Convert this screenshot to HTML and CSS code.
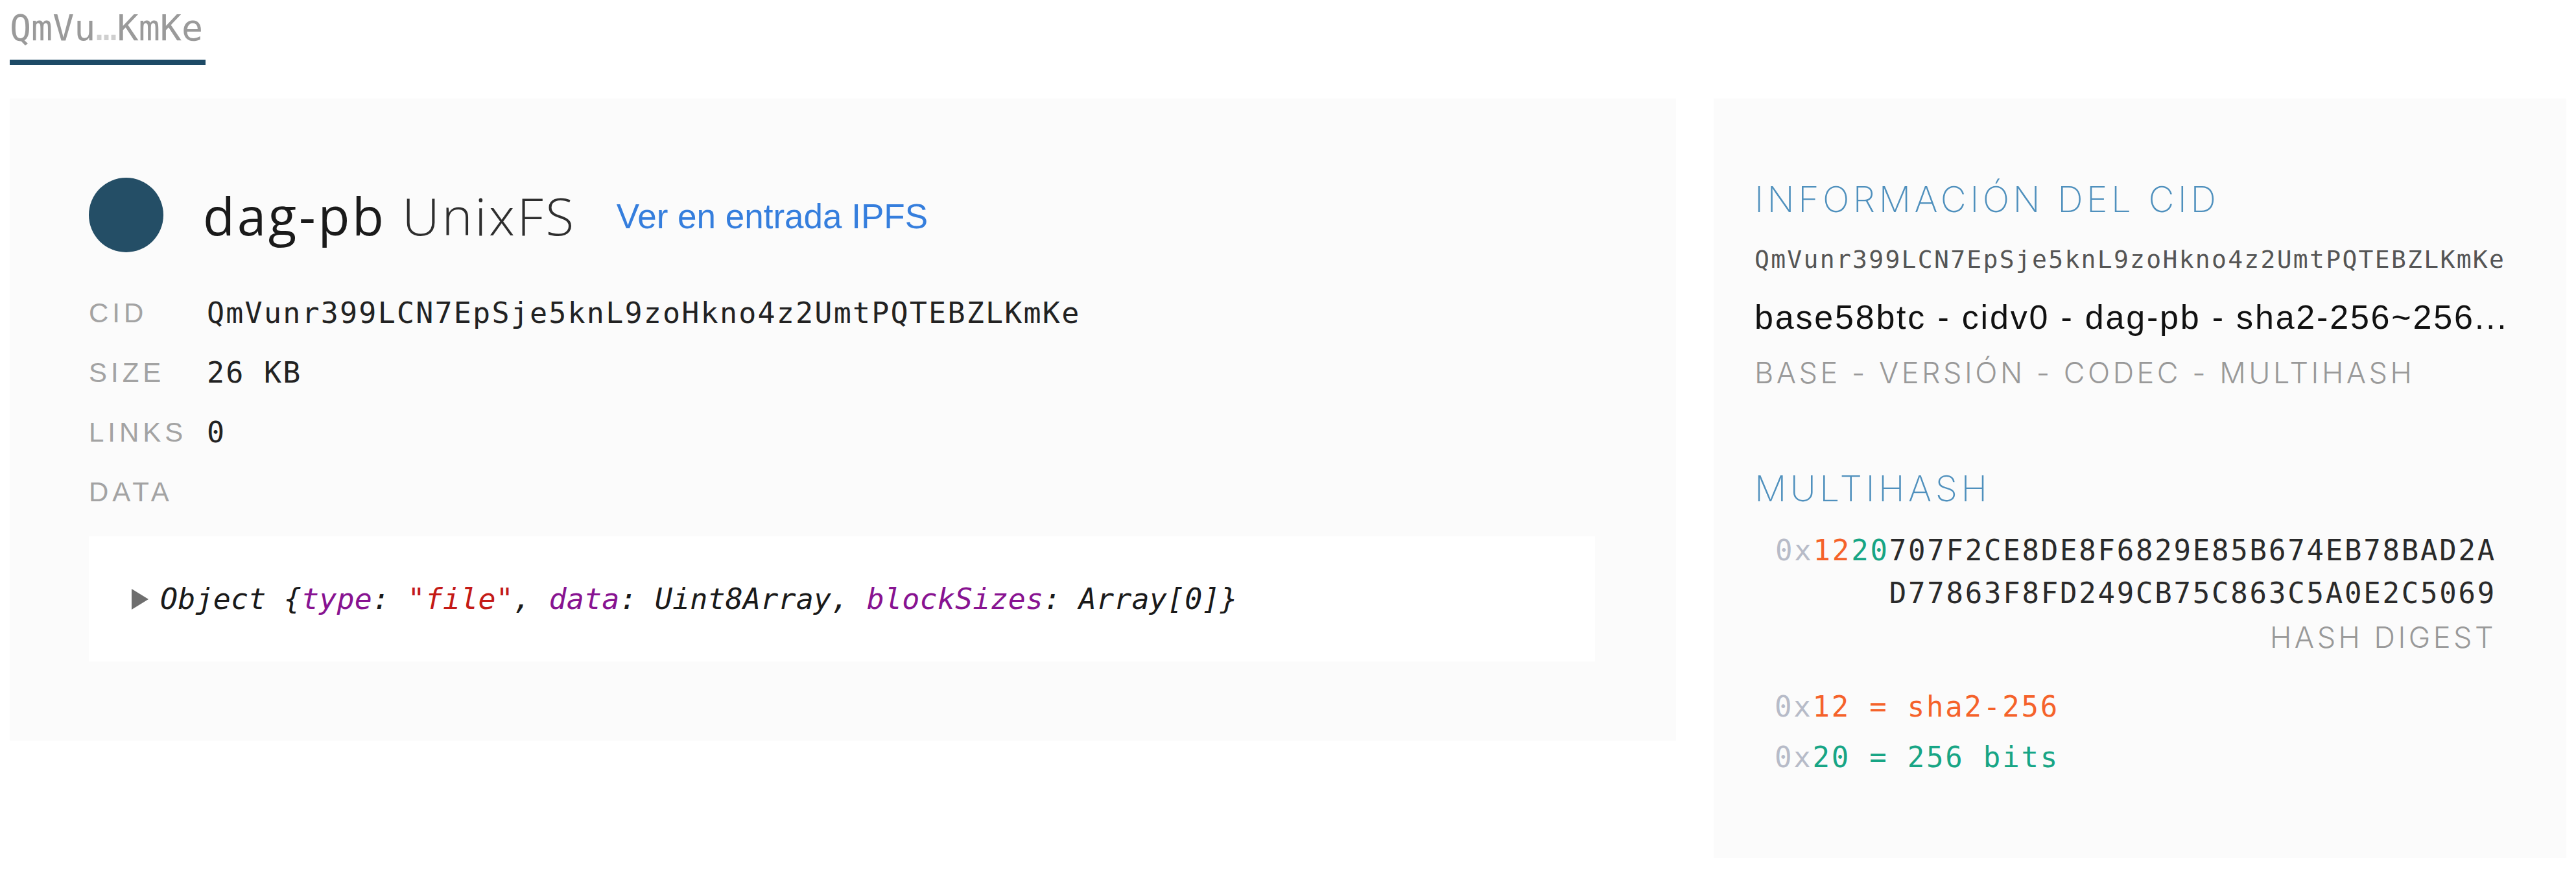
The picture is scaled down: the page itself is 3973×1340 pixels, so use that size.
FILE: index.html
```html
<!DOCTYPE html>
<html lang="es">
<head>
<meta charset="utf-8">
<title>QmVu…KmKe</title>
<link rel="stylesheet" href="styles.css">
</head>
<body>
<div class="page">
  <nav class="tabs">
    <div class="tab">QmVu<span class="tab-dim">…</span>KmKe</div>
  </nav>
  <main class="layout">
    <section class="node">
      <header class="node-head">
        <span class="node-dot"></span>
        <h1 class="node-title"><span class="codec">dag-pb</span> <span class="kind">UnixFS</span></h1>
        <a class="node-link" href="#">Ver en entrada IPFS</a>
      </header>
      <dl class="props">
        <dt class="prop-label">CID</dt>
        <dd class="prop-value">QmVunr399LCN7EpSje5knL9zoHkno4z2UmtPQTEBZLKmKe</dd>
        <dt class="prop-label">SIZE</dt>
        <dd class="prop-value">26 KB</dd>
        <dt class="prop-label">LINKS</dt>
        <dd class="prop-value">0</dd>
        <dt class="prop-label">DATA</dt>
        <dd class="prop-value"></dd>
      </dl>
      <div class="data-box">
        <span class="tri"></span>
        <code class="obj">Object {<span class="key">type</span>: <span class="str">"file"</span>, <span class="key">data</span>: Uint8Array, <span class="key">blockSizes</span>: Array[0]}</code>
      </div>
    </section>
    <aside class="cid-info">
      <h2 class="info-title">INFORMACIÓN DEL CID</h2>
      <div class="info-cid">QmVunr399LCN7EpSje5knL9zoHkno4z2UmtPQTEBZLKmKe</div>
      <div class="info-summary" title="base58btc - cidv0 - dag-pb - sha2-256~256~707F2CE8DE8F6829E85B674EB78BAD2AD77863F8FD249CB75C863C5A0E2C5069">base58btc - cidv0 - dag-pb - sha2-256~256...</div>
      <div class="info-legend">BASE - VERSIÓN - CODEC - MULTIHASH</div>
      <h2 class="info-title mh-title">MULTIHASH</h2>
      <div class="hash"><span class="pfx">0x</span><span class="fn">12</span><span class="len">20</span>707F2CE8DE8F6829E85B674EB78BAD2AD77863F8FD249CB75C863C5A0E2C5069</div>
      <div class="digest-label">HASH DIGEST</div>
      <div class="codes">
        <div><span class="pfx">0x</span><span class="fn">12 = sha2-256</span></div>
        <div><span class="pfx">0x</span><span class="len">20 = 256 bits</span></div>
      </div>
    </aside>
  </main>
</div>
</body>
</html>
```
FILE: styles.css
```css
html, body {
  margin: 0;
  background: #ffffff;
}

.page {
  padding: 11px 15px 0;
}

.tabs {
  display: flex;
}

.tab {
  font-family: "DejaVu Sans Mono", monospace;
  font-size: 55px;
  line-height: 64px;
  color: #9a9a9a;
  width: 302px;
  padding-bottom: 17px;
  border-bottom: 8px solid #1d4a66;
}

.tab-dim {
  color: #cfcfcf;
}

.layout {
  display: flex;
  align-items: flex-start;
  gap: 58px;
  margin-top: 52px;
}

.node {
  flex: 1;
  background: #fbfbfb;
  padding: 122px 125px 122px 122px;
}

.node-head {
  display: flex;
  align-items: center;
  height: 115px;
}

.node-dot {
  flex: none;
  width: 115px;
  height: 115px;
  border-radius: 50%;
  background: #244e66;
  margin-right: 61px;
}

.node-title {
  margin: 0;
  font-family: "Open Sans", sans-serif;
  font-size: 80px;
  font-weight: 400;
  letter-spacing: 3.7px;
  white-space: nowrap;
}

.codec {
  color: #1a1a1a;
}

.kind {
  color: #2e2e2e;
  font-weight: 300;
}

.node-link {
  margin-left: 62px;
  margin-top: 4px;
  font-family: "Liberation Sans", Arial, sans-serif;
  font-size: 53px;
  color: #357edd;
  text-decoration: none;
  white-space: nowrap;
}

.props {
  display: grid;
  grid-template-columns: 151px 1fr;
  column-gap: 31px;
  margin: 48px 0 0;
}

.prop-label {
  font-family: "Liberation Sans", Arial, sans-serif;
  font-size: 42px;
  line-height: 92px;
  letter-spacing: 6px;
  color: #a3a3a3;
}

.prop-value {
  margin: 0;
  font-family: "DejaVu Sans Mono", monospace;
  font-size: 45px;
  line-height: 92px;
  letter-spacing: 2.2px;
  color: #222222;
  white-space: nowrap;
}

.data-box {
  margin-top: 22px;
  height: 193px;
  background: #ffffff;
  display: flex;
  align-items: center;
  padding-left: 66px;
}

.tri {
  width: 0;
  height: 0;
  border-left: 26px solid #6e6e6e;
  border-top: 16px solid transparent;
  border-bottom: 16px solid transparent;
  margin-right: 18px;
}

.obj {
  font-family: "DejaVu Sans Mono", monospace;
  font-style: italic;
  font-size: 45px;
  letter-spacing: 0.15px;
  color: #1a1a1a;
  white-space: nowrap;
}

.key {
  color: #881391;
}

.str {
  color: #c41a16;
}

.cid-info {
  flex: none;
  width: 1315px;
  box-sizing: border-box;
  padding: 122px 63px 116px;
  background: #fbfbfb;
}

.info-title {
  margin: 0;
  font-family: Inter, "Noto Sans", sans-serif;
  font-weight: 200;
  font-size: 55px;
  line-height: 66px;
  letter-spacing: 0.1em;
  color: #4f90bd;
}

.info-cid {
  margin-top: 30px;
  font-family: "DejaVu Sans Mono", monospace;
  font-size: 38px;
  line-height: 60px;
  letter-spacing: 2.3px;
  color: #555555;
  white-space: nowrap;
}

.info-summary {
  margin-top: 29px;
  font-family: "Liberation Sans", Arial, sans-serif;
  font-size: 52px;
  line-height: 60px;
  letter-spacing: 2.8px;
  color: #111111;
  white-space: nowrap;
}

.info-legend {
  margin-top: 26px;
  font-family: Inter, "Noto Sans", sans-serif;
  font-weight: 300;
  font-size: 45px;
  line-height: 60px;
  letter-spacing: 0.1em;
  color: #999999;
}

.mh-title {
  margin-top: 115px;
}

.hash {
  margin: 30px 0 0 31px;
  width: 1113px;
  font-family: "DejaVu Sans Mono", monospace;
  font-size: 44px;
  line-height: 66px;
  letter-spacing: 2.77px;
  word-break: break-all;
  text-align: right;
  color: #2a2a2a;
}

.digest-label {
  margin: 5px 0 0 31px;
  width: 1113px;
  text-align: right;
  font-family: Inter, "Noto Sans", sans-serif;
  font-weight: 300;
  font-size: 45px;
  line-height: 60px;
  letter-spacing: 0.1em;
  color: #999999;
}

.codes {
  margin: 38px 0 0 31px;
  font-family: "DejaVu Sans Mono", monospace;
  font-size: 44px;
  line-height: 78px;
  letter-spacing: 2.77px;
}

.pfx {
  color: #b7bbc8;
}

.fn {
  color: #f5622a;
}

.len {
  color: #17a585;
}
```
